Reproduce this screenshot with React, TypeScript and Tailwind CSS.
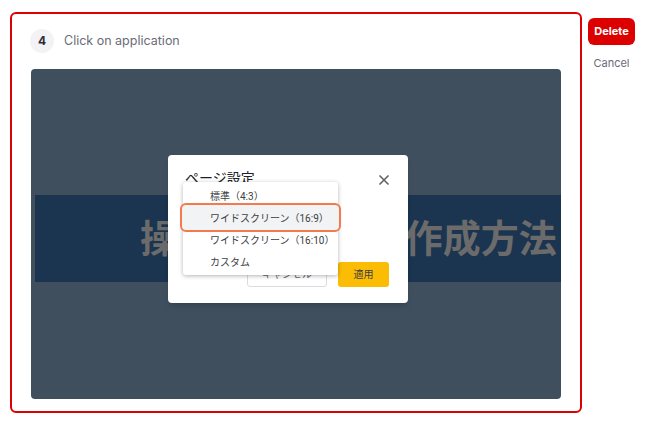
import React from "react";

const jp = "font-['Roboto','Noto_Sans_CJK_JP',sans-serif]";

const menuItems = [
  "標準（4:3）",
  "ワイドスクリーン（16:9）",
  "ワイドスクリーン（16:10）",
  "カスタム",
];

const Screenshot: React.FC = () => (
  <div className="relative mx-[19px] h-[330px] overflow-hidden rounded-[4px] bg-[#3f4f5e]">
    {/* title band of the slide */}
    <div className="ml-[4px] mt-[126px] flex h-[87px] items-center overflow-hidden whitespace-nowrap bg-[#1b3450] pl-[105px]">
      <span className={`${jp} text-[38px] font-bold leading-none text-[#6b6b6b]`}>
        操作マニュアル作成方法
      </span>
    </div>

    {/* page setup dialog */}
    <div className="absolute left-[137px] top-[86px] flex h-[148px] w-[240px] flex-col rounded-[4px] bg-white shadow-md">
      <div className="flex items-center justify-between pl-[17px] pr-[18px] pt-[14px]">
        <span className={`${jp} text-[14px] leading-[18px] text-[#202124]`}>ページ設定</span>
        <svg width="12" height="12" viewBox="0 0 12 12" className="mt-[4px]">
          <path d="M1.5 1.5 L10.5 10.5 M10.5 1.5 L1.5 10.5" stroke="#5f6368" strokeWidth="1.6" />
        </svg>
      </div>
      <div className="flex-1" />
      <div className="flex justify-end gap-[11px] pb-[16px] pr-[19px]">
        <div className={`${jp} flex h-[25px] w-[80px] items-center justify-center rounded-[3px] border border-[#dadce0] text-[10px] text-[#5f6368]`}>
          キャンセル
        </div>
        <div className={`${jp} flex h-[25px] w-[51px] items-center justify-center rounded-[3px] bg-[#fbbc04] text-[10px] text-[#3c4043]`}>
          適用
        </div>
      </div>

      {/* open dropdown */}
      <div className="absolute left-[15px] top-[27px] h-[93px] w-[155px] rounded-[3px] bg-white pt-[3px] shadow-[0_1px_4px_rgba(0,0,0,0.3)]">
        <div className="absolute left-[-3px] top-[21px] h-[29px] w-[161px] rounded-[6px] border-2 border-[#f47a4c] bg-[#f1f3f4]" />
        {menuItems.map((item) => (
          <div
            key={item}
            className={`${jp} relative flex h-[22px] items-center pl-[27px] text-[10px] text-[#3c4043]`}
          >
            {item}
          </div>
        ))}
      </div>
    </div>
  </div>
);

export default function App() {
  return (
    <div className="flex h-[422px] w-[647px] items-start bg-white font-['Inter',sans-serif]">
      <div className="ml-[10px] mt-[12px] flex h-[401px] w-[572px] flex-col rounded-[6px] border-2 border-[#dd0000]">
        <div className="flex items-center gap-[10px] pl-[18px] pt-[15px]">
          <div className="flex h-[24px] w-[24px] items-center justify-center rounded-full bg-[#f3f3f6] text-[12px] font-bold text-[#2d2d3a]">
            4
          </div>
          <span className="text-[12.5px] text-[#6b6b78]">Click on application</span>
        </div>
        <div className="mt-[16px]">
          <Screenshot />
        </div>
      </div>

      <div className="ml-[6px] mt-[18px] flex flex-col items-center">
        <div className="flex h-[27px] w-[47px] items-center justify-center rounded-[6px] bg-[#dd0000] text-[11px] font-bold text-white">
          Delete
        </div>
        <span className="mt-[10px] text-[11px] text-[#6b6b78]">Cancel</span>
      </div>
    </div>
  );
}
